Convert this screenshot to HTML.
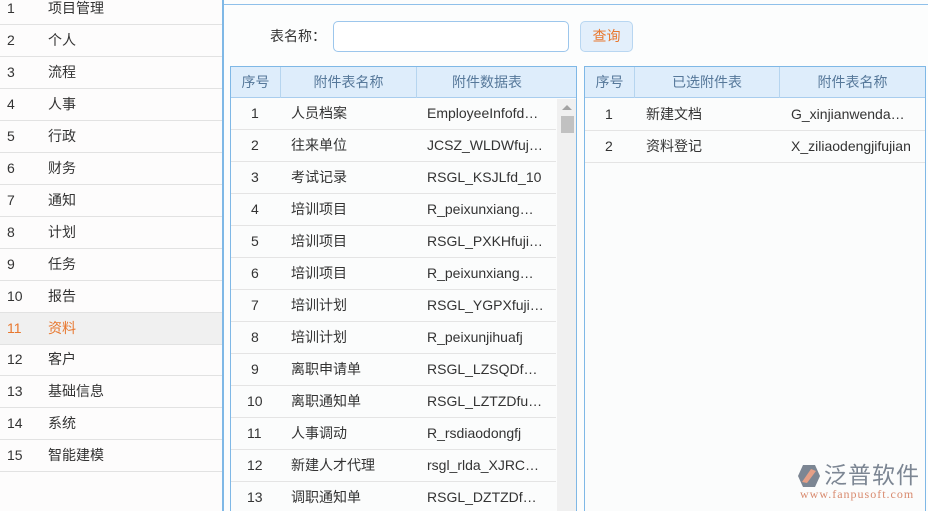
<!DOCTYPE html>
<html><head><meta charset="utf-8"><style>
*{margin:0;padding:0;box-sizing:border-box}
html,body{width:928px;height:511px;overflow:hidden}
body{background:#fcfdfd;font-family:"Liberation Sans","Noto Sans CJK SC",sans-serif;font-size:14px;color:#333;position:relative}
.a{position:absolute}
.side{left:0;top:0;width:222px;height:511px;background:#fdfcfc}
.sr{position:absolute;left:0;width:222px;height:32px;border-bottom:1px solid #e2e2e2;line-height:31px}
.sr .n{position:absolute;left:7px}
.sr .t{position:absolute;left:48px}
.sr.on{background:#f0f0f0;color:#e8772e}
.tbl{border:1px solid #7fb8e6;border-bottom:none;background:#fbfcfc;overflow:hidden}
.hd{position:absolute;top:0;height:31px;background:#deedfb;border-bottom:1px solid #a9cdee;color:#56789a;line-height:30px;text-align:center}
.hc{position:absolute;top:0;height:31px;border-right:1px solid #b6d5ef;text-align:center}
.row{position:absolute;height:32px;border-bottom:1px solid #e4e4e4;line-height:31px;white-space:nowrap}
.row span{position:absolute}
</style></head><body>
<div class="a side">
<div class="sr" style="top:-7px"><span class="n">1</span><span class="t">项目管理</span></div>
<div class="sr" style="top:25px"><span class="n">2</span><span class="t">个人</span></div>
<div class="sr" style="top:57px"><span class="n">3</span><span class="t">流程</span></div>
<div class="sr" style="top:89px"><span class="n">4</span><span class="t">人事</span></div>
<div class="sr" style="top:121px"><span class="n">5</span><span class="t">行政</span></div>
<div class="sr" style="top:153px"><span class="n">6</span><span class="t">财务</span></div>
<div class="sr" style="top:185px"><span class="n">7</span><span class="t">通知</span></div>
<div class="sr" style="top:217px"><span class="n">8</span><span class="t">计划</span></div>
<div class="sr" style="top:249px"><span class="n">9</span><span class="t">任务</span></div>
<div class="sr" style="top:281px"><span class="n">10</span><span class="t">报告</span></div>
<div class="sr on" style="top:313px"><span class="n">11</span><span class="t">资料</span></div>
<div class="sr" style="top:344px"><span class="n">12</span><span class="t">客户</span></div>
<div class="sr" style="top:376px"><span class="n">13</span><span class="t">基础信息</span></div>
<div class="sr" style="top:408px"><span class="n">14</span><span class="t">系统</span></div>
<div class="sr" style="top:440px"><span class="n">15</span><span class="t">智能建模</span></div>
</div>
<div class="a" style="left:222px;top:0;width:2px;height:511px;background:#7fb8e6"></div>
<div class="a" style="left:224px;top:4px;width:704px;height:1px;background:#8fc0ea"></div>
<div class="a" style="left:270px;top:26px;line-height:20px">表名称：</div>
<div class="a" style="left:333px;top:21px;width:236px;height:31px;border:1px solid #9cc6ec;border-radius:5px;background:#fff"></div>
<div class="a" style="left:580px;top:21px;width:53px;height:31px;border:1px solid #b8d6f1;border-radius:5px;background:#e3effb;color:#e8772e;text-align:center;line-height:29px">查询</div>

<div class="a tbl" style="left:230px;top:66px;width:347px;height:445px">
<div class="hd" style="left:0;width:345px"></div>
<div class="hc" style="left:0;width:50px;color:#56789a;line-height:30px">序号</div>
<div class="hc" style="left:50px;width:136px;color:#56789a;line-height:30px">附件表名称</div>
<div class="hc" style="left:186px;width:140px;color:#56789a;line-height:30px;border-right:none">附件数据表</div>
<div class="a" style="left:326px;top:32px;width:19px;height:430px;background:#f0f0f0"></div>
<div class="a" style="left:331px;top:38px;width:0;height:0;border-left:5px solid transparent;border-right:5px solid transparent;border-bottom:5px solid #a3a3a3"></div>
<div class="a" style="left:330px;top:49px;width:13px;height:17px;background:#c1c1c1"></div>
</div>
<div class="a" style="left:231px;top:98px;width:325px;height:413px;overflow:hidden">
<div class="row" style="top:0;width:325px"><span style="left:20px">1</span><span style="left:60px">人员档案</span><span style="left:196px">EmployeeInfofd…</span></div>
<div class="row" style="top:32px;width:325px"><span style="left:20px">2</span><span style="left:60px">往来单位</span><span style="left:196px">JCSZ_WLDWfuj…</span></div>
<div class="row" style="top:64px;width:325px"><span style="left:20px">3</span><span style="left:60px">考试记录</span><span style="left:196px">RSGL_KSJLfd_10</span></div>
<div class="row" style="top:96px;width:325px"><span style="left:20px">4</span><span style="left:60px">培训项目</span><span style="left:196px">R_peixunxiang…</span></div>
<div class="row" style="top:128px;width:325px"><span style="left:20px">5</span><span style="left:60px">培训项目</span><span style="left:196px">RSGL_PXKHfuji…</span></div>
<div class="row" style="top:160px;width:325px"><span style="left:20px">6</span><span style="left:60px">培训项目</span><span style="left:196px">R_peixunxiang…</span></div>
<div class="row" style="top:192px;width:325px"><span style="left:20px">7</span><span style="left:60px">培训计划</span><span style="left:196px">RSGL_YGPXfuji…</span></div>
<div class="row" style="top:224px;width:325px"><span style="left:20px">8</span><span style="left:60px">培训计划</span><span style="left:196px">R_peixunjihuafj</span></div>
<div class="row" style="top:256px;width:325px"><span style="left:20px">9</span><span style="left:60px">离职申请单</span><span style="left:196px">RSGL_LZSQDf…</span></div>
<div class="row" style="top:288px;width:325px"><span style="left:16px">10</span><span style="left:60px">离职通知单</span><span style="left:196px">RSGL_LZTZDfu…</span></div>
<div class="row" style="top:320px;width:325px"><span style="left:16px">11</span><span style="left:60px">人事调动</span><span style="left:196px">R_rsdiaodongfj</span></div>
<div class="row" style="top:352px;width:325px"><span style="left:16px">12</span><span style="left:60px">新建人才代理</span><span style="left:196px">rsgl_rlda_XJRC…</span></div>
<div class="row" style="top:384px;width:325px"><span style="left:16px">13</span><span style="left:60px">调职通知单</span><span style="left:196px">RSGL_DZTZDf…</span></div>
</div>

<div class="a tbl" style="left:584px;top:66px;width:342px;height:445px">
<div class="hd" style="left:0;width:340px"></div>
<div class="hc" style="left:0;width:50px;color:#56789a;line-height:30px">序号</div>
<div class="hc" style="left:50px;width:145px;color:#56789a;line-height:30px">已选附件表</div>
<div class="hc" style="left:195px;width:145px;color:#56789a;line-height:30px;border-right:none">附件表名称</div>
<div class="row" style="top:32px;left:0;width:340px"><span style="left:20px">1</span><span style="left:61px">新建文档</span><span style="left:206px">G_xinjianwenda…</span></div>
<div class="row" style="top:64px;left:0;width:340px"><span style="left:20px">2</span><span style="left:61px">资料登记</span><span style="left:206px">X_ziliaodengjifujian</span></div>
</div>

<div class="a" style="left:797px;top:464px;width:24px;height:24px">
<svg width="24" height="24" viewBox="0 0 24 24"><path d="M6 1H18L23 12L18 23H6L1 12Z" fill="#7c8693"/><path d="M5 18L14 5L19 7L10 19Z" fill="#e59f86"/></svg></div>
<div class="a" style="left:824px;top:461px;font-size:23px;color:#7c8693;letter-spacing:1px;line-height:28px">泛普软件</div>
<div class="a" style="left:800px;top:487px;font-size:12px;color:#d88a6e;font-family:'Liberation Serif',serif;letter-spacing:1px">www.fanpusoft.com</div>
</body></html>
